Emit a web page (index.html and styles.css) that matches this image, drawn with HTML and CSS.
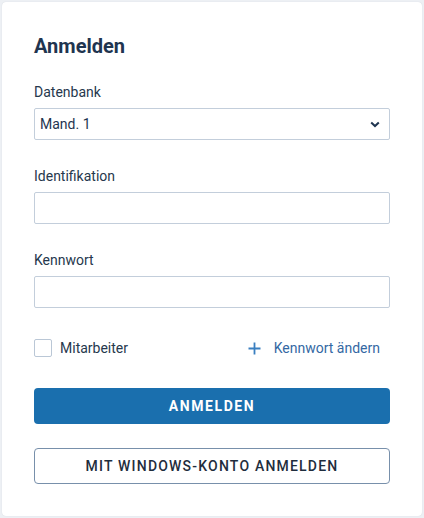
FILE: index.html
```html
<!DOCTYPE html>
<html lang="de">
<head>
<meta charset="utf-8">
<title>Anmelden</title>
<link rel="stylesheet" href="styles.css">
</head>
<body>
<div class="card">
  <h1 class="title">Anmelden</h1>
  <div class="field">
    <label class="label">Datenbank</label>
    <div class="select">
      <span class="select-text">Mand. 1</span>
      <svg class="chev" width="10" height="7" viewBox="0 0 10 7"><path d="M1.2 1.4 L5 5 L8.8 1.4" fill="none" stroke="#1f3550" stroke-width="2"/></svg>
    </div>
  </div>
  <div class="field">
    <label class="label">Identifikation</label>
    <div class="input"></div>
  </div>
  <div class="field">
    <label class="label">Kennwort</label>
    <div class="input"></div>
  </div>
  <div class="row">
    <div class="check">
      <span class="box"></span>
      <span class="check-label">Mitarbeiter</span>
    </div>
    <div class="link">
      <svg class="plus" width="13" height="13" viewBox="0 0 13 13"><path d="M6.5 0.5 V12.5 M0.5 6.5 H12.5" stroke="#3a7fc0" stroke-width="1.8" fill="none"/></svg>
      <span class="link-text">Kennwort ändern</span>
    </div>
  </div>
  <div class="btn primary">ANMELDEN</div>
  <div class="btn secondary">MIT WINDOWS-KONTO ANMELDEN</div>
</div>
</body>
</html>
```
FILE: styles.css
```css
html, body {
  margin: 0;
  padding: 0;
}
body {
  background: #edf0f4;
  font-family: Roboto, "Liberation Sans", sans-serif;
  width: 424px;
  height: 518px;
  overflow: hidden;
}
.card {
  box-sizing: border-box;
  margin: 2px 0 0 2px;
  width: 420px;
  height: 514px;
  background: #ffffff;
  border-radius: 4px;
  box-shadow: 0 0 1px rgba(30, 50, 80, 0.18);
  padding: 32px 32px 0 32px;
  display: flex;
  flex-direction: column;
}
.title {
  margin: 0;
  font-size: 20px;
  line-height: 24px;
  font-weight: 700;
  color: #1f3550;
}
.field {
  display: flex;
  flex-direction: column;
  gap: 6px;
}
.title + .field {
  margin-top: 24px;
}
.field + .field {
  margin-top: 26px;
}
.label {
  font-size: 14px;
  line-height: 20px;
  color: #26384d;
}
.select, .input {
  box-sizing: border-box;
  height: 32px;
  border: 1px solid #c3cedb;
  border-radius: 2px;
  background: #fff;
}
.select {
  display: flex;
  align-items: center;
  justify-content: space-between;
  padding: 0 9px 0 5px;
}
.select-text {
  font-size: 14px;
  color: #1f3550;
}
.row {
  margin-top: 31px;
  height: 18px;
  display: flex;
  align-items: center;
  justify-content: space-between;
}
.check {
  display: flex;
  align-items: center;
  gap: 8px;
}
.box {
  box-sizing: border-box;
  width: 18px;
  height: 18px;
  border: 1px solid #bac7d6;
  border-radius: 2px;
}
.check-label {
  font-size: 14px;
  color: #26384d;
}
.link {
  display: flex;
  align-items: center;
  gap: 13px;
  padding-right: 10px;
}
.link-text {
  font-size: 14px;
  color: #3468a3;
}
.btn {
  box-sizing: border-box;
  height: 36px;
  border-radius: 4px;
  display: flex;
  align-items: center;
  justify-content: center;
  font-size: 14px;
}
.primary {
  margin-top: 31px;
  background: #1a6fae;
  color: #ffffff;
  font-weight: 700;
  letter-spacing: 1.6px;
}
.secondary {
  margin-top: 24px;
  border: 1px solid #7890ab;
  color: #1f2d3d;
  font-weight: 500;
  letter-spacing: 1.2px;
}
```
